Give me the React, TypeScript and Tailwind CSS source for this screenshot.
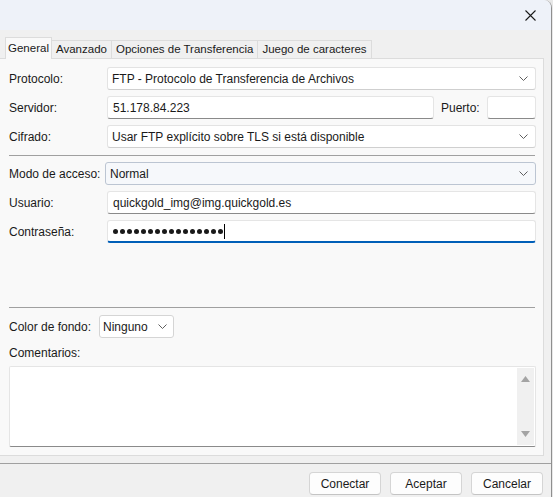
import React from 'react';

const font = { fontFamily: '"Liberation Sans", Arial, sans-serif' };

function Chevron() {
  return (
    <svg width="9" height="5" viewBox="0 0 9 5" className="shrink-0">
      <polyline points="0.5,0.5 4.5,4.5 8.5,0.5" fill="none" stroke="#5f5f5f" strokeWidth="1" />
    </svg>
  );
}

function Combo({ value, className = '', hover = false }: { value: string; className?: string; hover?: boolean }) {
  return (
    <div
      className={`h-[23px] flex items-center justify-between pl-[4px] pr-[7px] rounded-[3px] border text-[12px] text-[#1a1a1a] ${
        hover ? 'bg-[#f6f8fb] border-[#bcc5d2]' : 'bg-white border-[#e3e3e3] border-b-[#cfcfcf]'
      } ${className}`}
    >
      <span>{value}</span>
      <Chevron />
    </div>
  );
}

function Input({ value, className = '', focus = false, children }: { value?: string; className?: string; focus?: boolean; children?: React.ReactNode }) {
  return (
    <div
      className={`h-[23px] flex items-center pl-[5px] rounded-[3px] bg-white border border-[#e5e5e5] text-[12px] text-[#1a1a1a] ${
        focus ? 'border-b-2 border-b-[#005fb8]' : 'border-b-[#8a8a8a]'
      } ${className}`}
    >
      {value}
      {children}
    </div>
  );
}

function Row({ label, children, labelW = 'w-[98px]' }: { label: string; children: React.ReactNode; labelW?: string }) {
  return (
    <div className="flex items-center">
      <span className={`${labelW} shrink-0 text-[12px] text-[#1a1a1a]`}>{label}</span>
      {children}
    </div>
  );
}

function Button({ label }: { label: string }) {
  return (
    <div className="w-[72px] h-[23px] flex items-center justify-center rounded-[4px] bg-[#fdfdfd] border border-[#d5d5d5] border-b-[#c4c4c4] text-[12px] text-[#1a1a1a]">
      {label}
    </div>
  );
}

const tabs = ['General', 'Avanzado', 'Opciones de Transferencia', 'Juego de caracteres'];

export default function App() {
  return (
    <div className="w-[553px] h-[497px] flex bg-[#e8e8e8] overflow-hidden select-none" style={font}>
      <div className="w-[552px] h-full flex flex-col bg-[#f0f0f0] border-r border-[#8f8f8f] rounded-tr-[8px] overflow-hidden">
        {/* title bar */}
        <div className="h-[30px] shrink-0 bg-[#eef2f9] flex items-center justify-end pr-[15px]">
          <svg width="11" height="11" viewBox="0 0 11 11">
            <path d="M0.5 0.5 L10.5 10.5 M10.5 0.5 L0.5 10.5" stroke="#1a1a1a" strokeWidth="1.1" />
          </svg>
        </div>

        {/* tabs */}
        <div className="flex items-end pl-[5px] pt-[7px] h-[28px] shrink-0">
          {tabs.map((t, i) => (
            <div
              key={t}
              className={`flex items-center justify-center text-[11.5px] text-[#1a1a1a] border border-b-0 border-[#dcdcdc] ${
                i === 0
                  ? 'h-[22px] w-[47px] bg-[#f9f9f9] relative top-[1px]'
                  : 'h-[18px] px-[4px] bg-[#f0f0f0] border-l-0'
              }`}
            >
              {t}
            </div>
          ))}
        </div>

        {/* panel */}
        <div className="shrink-0 w-[544px] bg-[#f9f9f9] border-t border-r border-b border-[#dcdcdc] pt-[8px] pb-[8px] pl-[9px] pr-[7px] flex flex-col">
          <div className="flex flex-col gap-[6px]">
            <Row label="Protocolo:">
              <Combo value="FTP - Protocolo de Transferencia de Archivos" className="flex-1" />
            </Row>
            <Row label="Servidor:">
              <Input value="51.178.84.223" className="w-[327px]" />
              <span className="ml-[7px] w-[46px] text-[12px] text-[#1a1a1a]">Puerto:</span>
              <Input className="flex-1" />
            </Row>
            <Row label="Cifrado:">
              <Combo value="Usar FTP explícito sobre TLS si está disponible" className="flex-1" />
            </Row>
          </div>
          <div className="h-px bg-[#a0a0a0] mt-[7px] mr-[1px]" />
          <div className="flex flex-col gap-[6px] mt-[6px]">
            <Row label="Modo de acceso:" labelW="w-[96px]">
              <Combo value="Normal" className="flex-1" hover />
            </Row>
            <Row label="Usuario:">
              <Input value="quickgold_img@img.quickgold.es" className="flex-1" />
            </Row>
            <Row label="Contraseña:">
              <Input focus className="flex-1">
                <div className="flex gap-[2px] items-center">
                  {Array.from({ length: 16 }).map((_, i) => (
                    <span key={i} className="w-[5px] h-[5px] rounded-full bg-[#1a1a1a]" />
                  ))}
                </div>
                <span className="w-px h-[15px] bg-black ml-[1px]" />
              </Input>
            </Row>
          </div>
          <div className="h-px bg-[#a0a0a0] mt-[64px] mr-[1px]" />
          <div className="flex items-center mt-[7px]">
            <span className="w-[90px] text-[12px] text-[#1a1a1a]">Color de fondo:</span>
            <div className="w-[75px] h-[23px] flex items-center justify-between pl-[3px] pr-[6px] rounded-[3px] border border-[#d5d5d5] bg-white text-[12px] text-[#1a1a1a]">
              <span>Ninguno</span>
              <Chevron />
            </div>
          </div>
          <div className="mt-[6px] text-[12px] text-[#1a1a1a]">Comentarios:</div>
          <div className="mt-[4px] h-[81px] bg-white border border-[#e5e5e5] border-b-[#8a8a8a] rounded-[2px] flex justify-end p-[1px]">
            <div className="w-[17px] h-full bg-[#f0f0f0] flex flex-col items-center justify-between py-[8px]">
              <svg width="9" height="6" viewBox="0 0 9 6"><polygon points="4.5,0 9,6 0,6" fill="#a3a3a3" /></svg>
              <svg width="9" height="6" viewBox="0 0 9 6"><polygon points="0,0 9,0 4.5,6" fill="#a3a3a3" /></svg>
            </div>
          </div>
        </div>

        <div className="h-px bg-[#a0a0a0] mt-[7px]" />

        {/* buttons */}
        <div className="flex justify-end gap-[9px] pr-[8px] mt-[8px]">
          <Button label="Conectar" />
          <Button label="Aceptar" />
          <Button label="Cancelar" />
        </div>
      </div>
    </div>
  );
}
